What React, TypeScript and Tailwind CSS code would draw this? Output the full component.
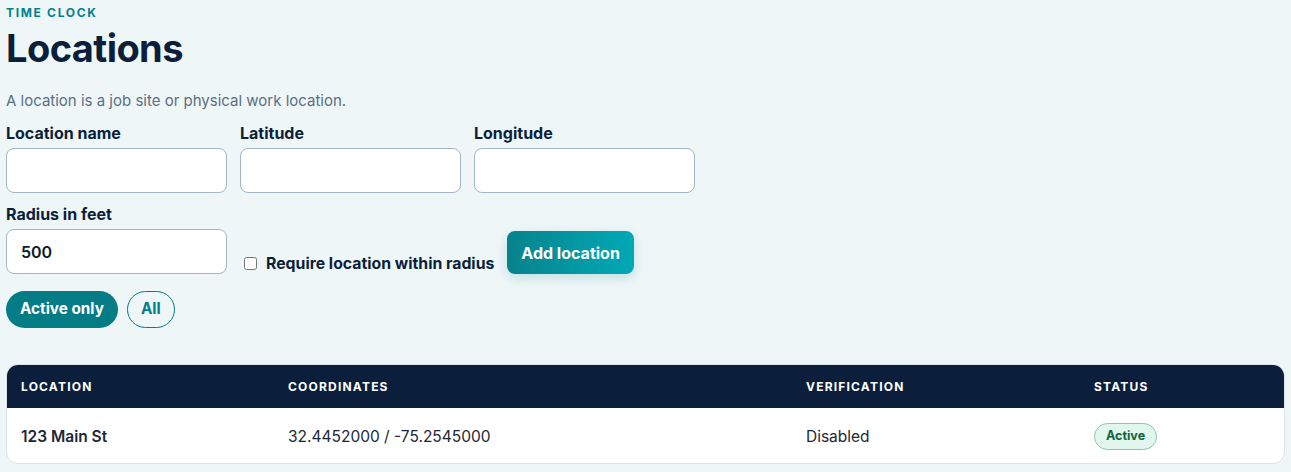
import React, { useState } from 'react';

const inputCls =
  'h-[45px] w-[221px] rounded-[8px] border border-[#a3b6c6] bg-white px-[14px] text-[16px] font-semibold text-[#0b1a2e] outline-none';

export default function App() {
  const [filter, setFilter] = useState<'active' | 'all'>('active');
  const [radius, setRadius] = useState('500');

  return (
    <div className="min-h-[472px] w-full bg-[#eef6f8] px-[6px] pt-[6px] font-['Inter','Noto_Sans',sans-serif] text-[#0b1f3a]">
      <div className="text-[12px] font-bold uppercase leading-[14px] tracking-[0.14em] text-[#06818a]">Time clock</div>
      <h1 className="mt-[6px] text-[38px] font-bold leading-[44px] tracking-[-0.015em] text-[#0b1f3a]">Locations</h1>
      <p className="mt-[22px] text-[15px] leading-[18px] text-[#5b6e83]">A location is a job site or physical work location.</p>

      <div className="mt-[14px] flex gap-[13px]">
        {['Location name', 'Latitude', 'Longitude'].map((l) => (
          <label key={l} className="flex flex-col">
            <span className="text-[16px] font-bold leading-[19px] text-[#0b1f3a]">{l}</span>
            <input className={`mt-[5px] ${inputCls}`} />
          </label>
        ))}
      </div>

      <div className="mt-[12px] flex items-end gap-[13px]">
        <label className="flex flex-col">
          <span className="text-[16px] font-bold leading-[19px] text-[#0b1f3a]">Radius in feet</span>
          <input className={`mt-[5px] ${inputCls}`} value={radius} onChange={(e) => setRadius(e.target.value)} />
        </label>
        <label className="flex h-[43px] items-center gap-[9px] pl-[4px] pt-[22px]">
          <input type="checkbox" className="h-[13px] w-[13px]" />
          <span className="text-[15.8px] font-bold text-[#0b1f3a]">Require location within radius</span>
        </label>
        <button className="h-[43px] rounded-[8px] bg-gradient-to-r from-[#06838d] to-[#00a9b5] px-[14px] text-[16px] font-bold text-white shadow-[0_4px_12px_rgba(0,120,130,0.18)]">
          Add location
        </button>
      </div>

      <div className="mt-[17px] flex gap-[9px]">
        <button
          onClick={() => setFilter('active')}
          className={`h-[37px] rounded-full px-[14px] text-[15.3px] font-bold ${
            filter === 'active' ? 'bg-[#047c86] text-white' : 'border border-[#047c86] text-[#047c86]'
          }`}
        >
          Active only
        </button>
        <button
          onClick={() => setFilter('all')}
          className={`h-[37px] rounded-full px-[13px] text-[15.3px] font-bold ${
            filter === 'all' ? 'bg-[#047c86] text-white' : 'border border-[#047c86] text-[#047c86]'
          }`}
        >
          All
        </button>
      </div>

      <div className="mt-[36px] overflow-hidden rounded-[12px] border border-[#d9e4ea] bg-white">
        <div className="grid h-[43px] grid-cols-[267px_518px_288px_1fr] items-center bg-[#0b1f3d] px-[14px] text-[12px] font-bold uppercase tracking-[0.1em] text-white">
          <div>Location</div>
          <div>Coordinates</div>
          <div>Verification</div>
          <div>Status</div>
        </div>
        <div className="grid h-[55px] grid-cols-[267px_518px_288px_1fr] items-center px-[14px] pt-[2px] text-[15.5px] text-[#1c2736]">
          <div className="font-semibold">123 Main St</div>
          <div>32.4452000 / -75.2545000</div>
          <div>Disabled</div>
          <div>
            <span className="inline-flex h-[27px] items-center rounded-full border border-[#7fcfa6] bg-[#e1f6ec] px-[11px] text-[12.5px] font-bold text-[#11643b]">
              Active
            </span>
          </div>
        </div>
      </div>
    </div>
  );
}
